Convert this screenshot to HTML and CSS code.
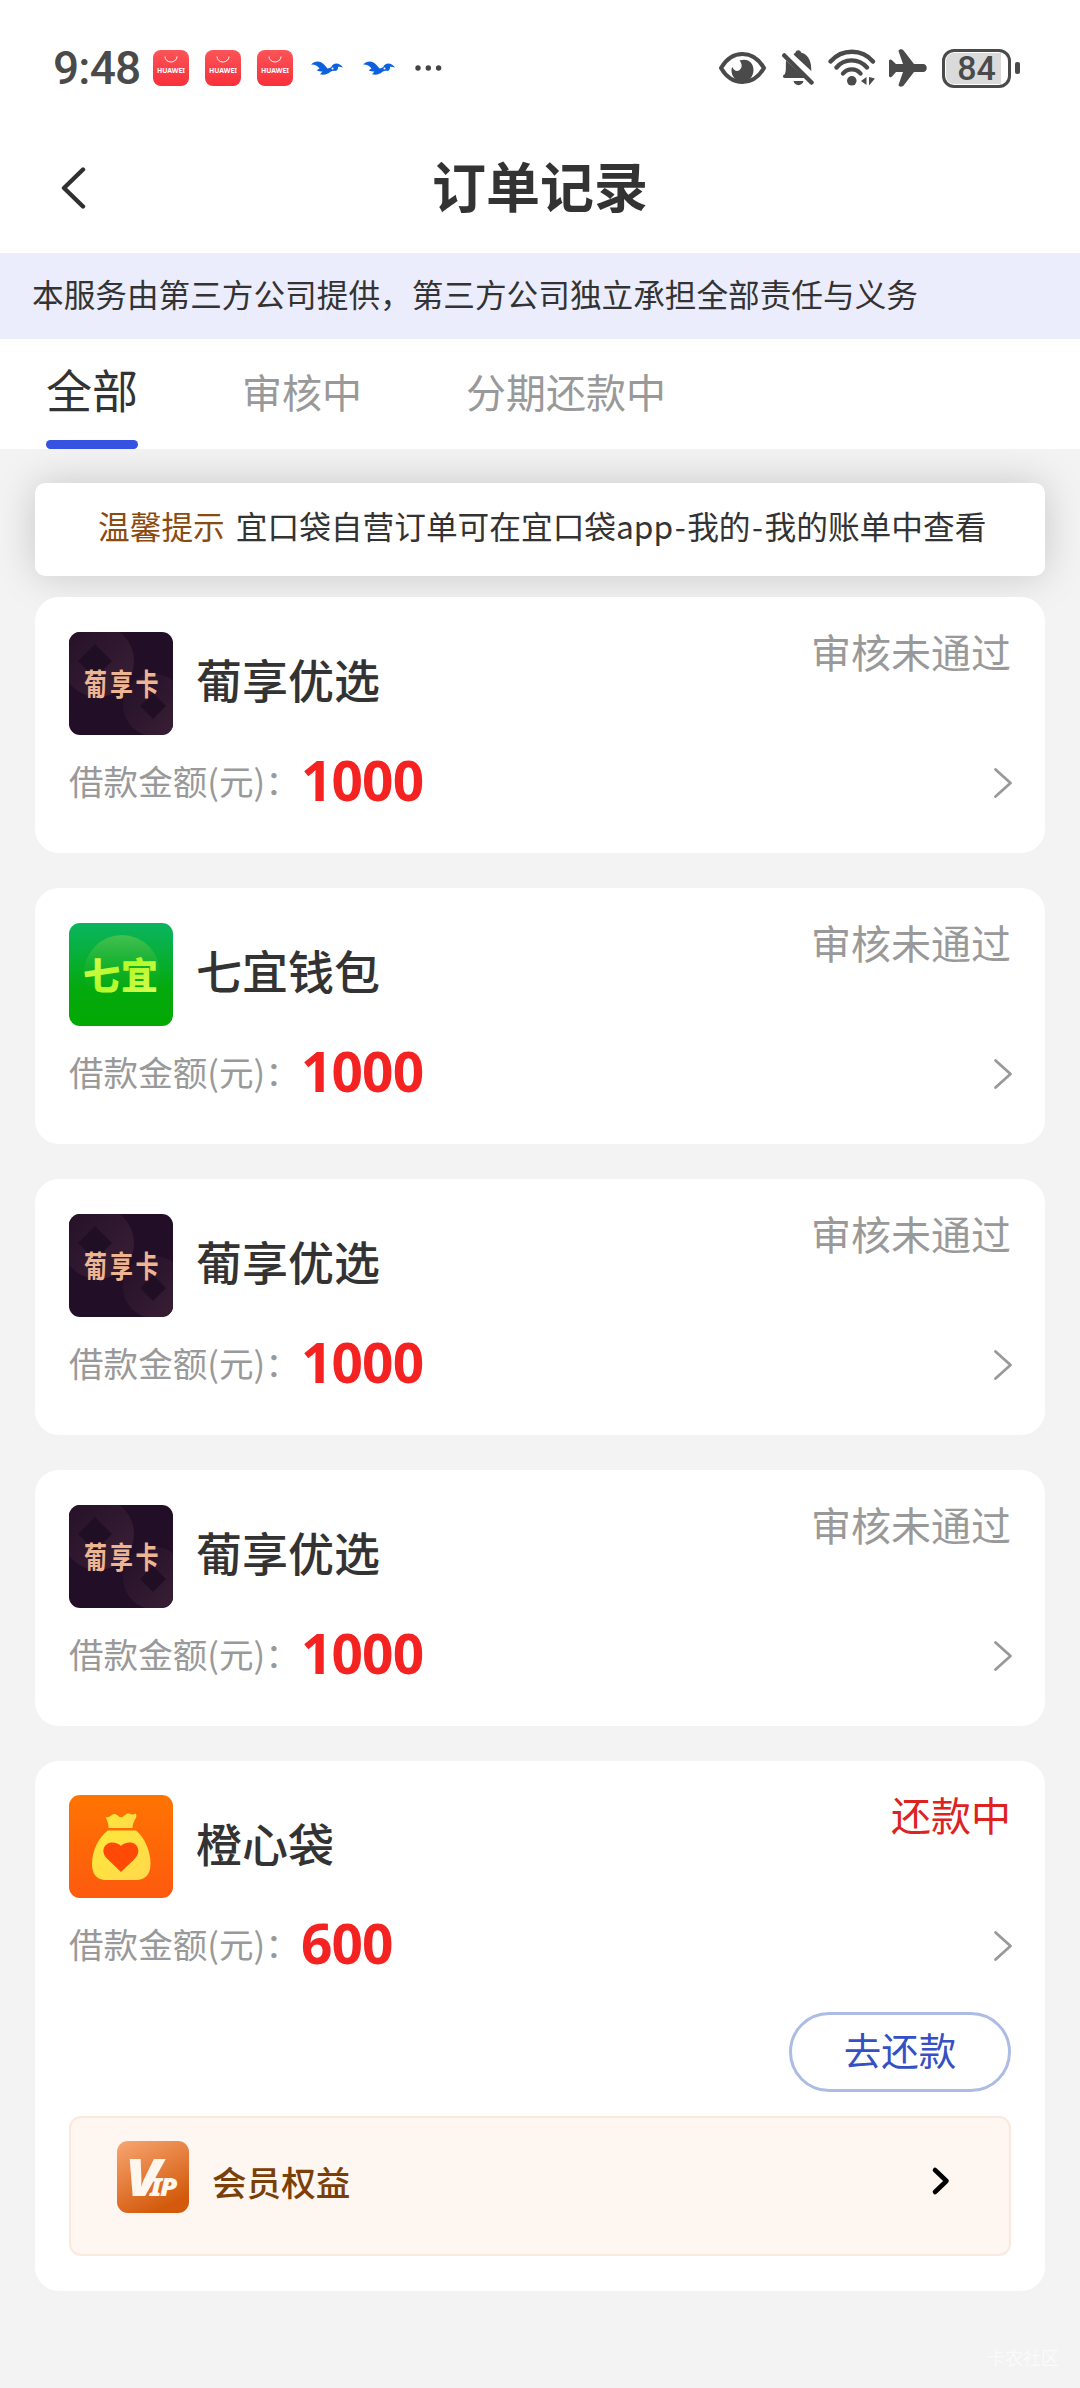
FILE: index.html
```html
<!DOCTYPE html>
<html lang="zh-CN">
<head>
<meta charset="utf-8">
<title>订单记录</title>
<link rel="stylesheet" href="styles.css">
</head>
<body>
<svg class="defs" width="0" height="0" aria-hidden="true">
  <defs>
    <linearGradient id="g-store" x1="0" y1="0" x2="0" y2="1"><stop offset="0" stop-color="#fb5458"/><stop offset="1" stop-color="#f8303a"/></linearGradient>
    <linearGradient id="g-green" x1="0" y1="0" x2="0" y2="1"><stop offset="0" stop-color="#0ab560"/><stop offset=".65" stop-color="#04a90c"/><stop offset="1" stop-color="#02a802"/></linearGradient>
    <linearGradient id="g-disc" x1="0" y1="0" x2="0" y2="1"><stop offset="0" stop-color="#45c050"/><stop offset=".8" stop-color="#07ab12" stop-opacity="0"/></linearGradient>
    <linearGradient id="g-lime" x1="0" y1="0" x2="1" y2="1"><stop offset="0" stop-color="#e6f95a"/><stop offset=".5" stop-color="#b4fb28"/><stop offset="1" stop-color="#e0fa60"/></linearGradient>
    <linearGradient id="g-orange" x1="0" y1="0" x2="0" y2="1"><stop offset="0" stop-color="#ff7402"/><stop offset="1" stop-color="#fd5a0e"/></linearGradient>
    <linearGradient id="g-bag" x1="0" y1="0" x2="1" y2="1"><stop offset="0" stop-color="#ffe93a"/><stop offset="1" stop-color="#ffd84c"/></linearGradient>
    <linearGradient id="g-vip" x1="0" y1="0" x2=".5" y2="1"><stop offset="0" stop-color="#f8a672"/><stop offset="1" stop-color="#d35a0c"/></linearGradient>
    <linearGradient id="g-ring" x1="0" y1="0" x2="1" y2="1"><stop offset="0" stop-color="#241028"/><stop offset="1" stop-color="#3a2036"/></linearGradient>
  </defs>
  <symbol id="store" viewBox="0 0 36 36">
    <rect width="36" height="36" rx="8" fill="url(#g-store)"/>
    <path d="M12 6.500a6 5.500 0 0 0 12 0" fill="none" stroke="#fff" stroke-width="1"/>
  </symbol>
  <symbol id="bird" viewBox="0 0 32 14">
    <path d="M0 3.500C3 .3 7-.3 10 1.200c2.800 1.500 4.500 4 6.500 6.300 1.500-.2 2.800-.6 3.800-1.500C21.500 2 28 .5 32 6.500c-2-.8-3.500-1-5-.8.3 1.800-.5 3.300-2 4.300-2-.6-4-.3-5.500.8-2.700 2.200-6 3.700-10.500 2.400L11.500 10.500C9.500 10.500 7.500 10.500 5.800 9.300L8.500 7.500C6.500 4.500 3.500 3.300 0 3.500z" fill="#0b62dc"/>
    <circle cx="21.500" cy="7.500" r="1" fill="#fff"/>
  </symbol>
  <symbol id="chevron" viewBox="0 0 20 32">
    <path d="M2.500 2.500 17.500 16 2.500 29.500" fill="none" stroke="#999" stroke-width="2.800" stroke-linecap="round" stroke-linejoin="round"/>
  </symbol>
  <symbol id="pu-back" viewBox="0 0 104 103">
    <rect width="104" height="103" fill="#220f27"/>
    <circle cx="29" cy="29" r="36" fill="url(#g-ring)"/>
    <path d="M26 12 43 29 26 46 9 29z" fill="#200e25"/>
    <circle cx="85" cy="73" r="31" fill="url(#g-ring)"/>
    <path d="M84 61 97 74 84 87 71 74z" fill="#200e25"/>
  </symbol>
</svg>

<header class="statusbar">
  <div class="status-left">
    <span class="clock">9:48</span>
    <svg class="app-dot" width="36" height="36"><use href="#store"/><text x="4" y="23.400" class="store-word" textLength="28" lengthAdjust="spacingAndGlyphs">HUAWEI</text></svg>
    <svg class="app-dot" width="36" height="36"><use href="#store"/><text x="4" y="23.400" class="store-word" textLength="28" lengthAdjust="spacingAndGlyphs">HUAWEI</text></svg>
    <svg class="app-dot" width="36" height="36"><use href="#store"/><text x="4" y="23.400" class="store-word" textLength="28" lengthAdjust="spacingAndGlyphs">HUAWEI</text></svg>
    <svg class="bird" width="32" height="14"><use href="#bird"/></svg>
    <svg class="bird" width="32" height="14"><use href="#bird"/></svg>
    <svg class="more" width="28" height="8" viewBox="0 0 28 8" fill="#444"><circle cx="4" cy="4" r="2.700"/><circle cx="14.300" cy="4" r="2.700"/><circle cx="24.600" cy="4" r="2.700"/></svg>
  </div>
  <div class="status-right">
    <svg class="eye" width="47" height="34" viewBox="0 0 47 34">
      <path d="M2 17C7 8.500 14.500 3 23.500 3S40 8.500 45 17C40 25.500 32.500 31 23.500 31S7 25.500 2 17z" fill="none" stroke="#4a4a4a" stroke-width="4" stroke-linejoin="round"/>
      <path d="M20.500 9.500C29 6.500 34.500 12 34.500 19c0 7-5 11.500-11 11.500S12.500 26 12.500 19.500c0-1.600.3-2.500.8-3.500 1.700 3.800 4.700 4.700 7 3.200 3-2 3.200-6.200.2-9.700z" fill="#4a4a4a"/>
    </svg>
    <svg class="bell" width="32" height="38" viewBox="0 0 32 38" fill="#4a4a4a">
      <path d="M4 11.500 23 29H2.500c-2 0-2-3 0-3.500C4.500 23 3.600 17.500 4 11.500zM11.500 5.500C12.500 4.500 13 4 13.500 3.600c.5-3 5-3 5.500 0C27 6 29.500 13 29.300 22zM11.500 32h10c-1 5.500-9 5.500-10 0z"/>
      <path d="M2.300 6.500 29.500 33.500" fill="none" stroke="#4a4a4a" stroke-width="4.500" stroke-linecap="round"/>
    </svg>
    <svg class="wifi" width="48" height="38" viewBox="0 0 48 38" fill="none" stroke="#4a4a4a" stroke-width="4.300" stroke-linecap="round">
      <path d="M2.500 12.500C14-.5 34-.5 45 12.500M8.500 18.500c8-9.500 22-9.500 30.500 0M15 24.500c4.500-5.500 13-5.500 17.500 0"/>
      <circle cx="23.800" cy="31.800" r="4.800" fill="#4a4a4a" stroke="none"/>
      <path d="M38.500 28v8l-5.500-4zM41 28v8.500l6-7z" fill="#4a4a4a" stroke="none"/>
    </svg>
    <svg class="plane" width="38" height="38" viewBox="0 0 38 38" fill="#4a4a4a">
      <path d="M9.500 2c.5-2 4-2.500 5.500 0l10 13h9c5 0 5 8 0 8h-9L15 36c-1.500 2.500-5 2-5.500 0L14 23H7l-4 4.500c-1 1.200-3 .8-3-.8V12c0-1.700 2-2 3-.8L7 15h7z"/>
    </svg>
    <div class="battery"><span class="battery-body">84</span><i class="battery-tip"></i></div>
  </div>
</header>

<nav class="titlebar">
  <svg class="back" width="26" height="44" viewBox="0 0 26 44"><path d="M23 3.500 4 22 23 40.500" fill="none" stroke="#303030" stroke-width="4.400" stroke-linecap="round" stroke-linejoin="round"/></svg>
  <h1 class="title">订单记录</h1>
</nav>

<p class="notice">本服务由第三方公司提供，第三方公司独立承担全部责任与义务</p>

<div class="tabs">
  <a class="tab tab-active">全部</a>
  <a class="tab">审核中</a>
  <a class="tab">分期还款中</a>
</div>

<main class="page">
  <p class="tip"><span class="tip-label">温馨提示</span><span>宜口袋自营订单可在宜口袋app<span class="dash">-</span>我的<span class="dash">-</span>我的账单中查看</span></p>

  <section class="card">
    <div class="card-head">
      <svg class="logo" viewBox="0 0 104 103"><use href="#pu-back"/><text class="pu-word" transform="scale(1 1.300)" x="15 41 66.500" y="48.500">葡享卡</text></svg>
      <h2 class="name">葡享优选</h2>
      <span class="state">审核未通过</span>
    </div>
    <div class="amount-row"><span class="label">借款金额(元)：</span><b class="amount">1000</b><svg class="arrow" width="20" height="32"><use href="#chevron"/></svg></div>
  </section>

  <section class="card">
    <div class="card-head">
      <svg class="logo" viewBox="0 0 104 103">
        <rect width="104" height="103" fill="url(#g-green)"/>
        <circle cx="53" cy="50" r="38" fill="url(#g-disc)"/>
        <text class="qi-word" x="14 52" y="67">七宜</text>
      </svg>
      <h2 class="name">七宜钱包</h2>
      <span class="state">审核未通过</span>
    </div>
    <div class="amount-row"><span class="label">借款金额(元)：</span><b class="amount">1000</b><svg class="arrow" width="20" height="32"><use href="#chevron"/></svg></div>
  </section>

  <section class="card">
    <div class="card-head">
      <svg class="logo" viewBox="0 0 104 103"><use href="#pu-back"/><text class="pu-word" transform="scale(1 1.300)" x="15 41 66.500" y="48.500">葡享卡</text></svg>
      <h2 class="name">葡享优选</h2>
      <span class="state">审核未通过</span>
    </div>
    <div class="amount-row"><span class="label">借款金额(元)：</span><b class="amount">1000</b><svg class="arrow" width="20" height="32"><use href="#chevron"/></svg></div>
  </section>

  <section class="card">
    <div class="card-head">
      <svg class="logo" viewBox="0 0 104 103"><use href="#pu-back"/><text class="pu-word" transform="scale(1 1.300)" x="15 41 66.500" y="48.500">葡享卡</text></svg>
      <h2 class="name">葡享优选</h2>
      <span class="state">审核未通过</span>
    </div>
    <div class="amount-row"><span class="label">借款金额(元)：</span><b class="amount">1000</b><svg class="arrow" width="20" height="32"><use href="#chevron"/></svg></div>
  </section>

  <section class="card card-active">
    <div class="card-head">
      <svg class="logo" viewBox="0 0 104 103">
        <rect width="104" height="103" fill="url(#g-orange)"/>
        <path d="M36.500 22.500c2.500-.3 5-1 7-3 2.500-1.500 5 .5 7 2.500h3c2-2 5-4.500 8-3 1.500 1 3.500.2 5-.5 1.500 1.500 1 4-.5 6-1.500 3-2.500 5.500-2.500 8.500h-24c0-4-1-7.500-3-10.500z" fill="url(#g-bag)"/>
        <path d="M39 35.500h28c8 6.500 14.500 20 14.500 33C81.500 80 76 85 67 85H37c-9 0-14-5-14-16.500C23 55.500 30 42 39 35.500z" fill="url(#g-bag)"/>
        <path d="M52 77 38 63.500C30.500 56 36 47.500 43 47.500c4 0 7 1.500 9 3.500 2-2 5-3.500 9-3.500 7 0 12 8.500 5 16z" fill="#fe4a06"/>
      </svg>
      <h2 class="name">橙心袋</h2>
      <span class="state state-due">还款中</span>
    </div>
    <div class="amount-row"><span class="label">借款金额(元)：</span><b class="amount">600</b><svg class="arrow" width="20" height="32"><use href="#chevron"/></svg></div>
    <a class="repay">去还款</a>
    <div class="vip">
      <svg class="vip-logo" width="72" height="72" viewBox="0 0 72 72">
        <rect width="72" height="72" rx="11" fill="url(#g-vip)"/>
        <text class="vip-word" transform="scale(1.120 1)" x="7.500" y="55">V<tspan class="vip-small" x="29.500 38.500">IP</tspan></text>
      </svg>
      <span class="vip-text">会员权益</span>
      <svg class="vip-arrow" width="20" height="32" viewBox="0 0 20 32"><path d="M4 5 15.500 16 4 27" fill="none" stroke="#000" stroke-width="4.600" stroke-linecap="round" stroke-linejoin="round"/></svg>
    </div>
  </section>
</main>
<footer class="watermark">卡农社区</footer>
</body>
</html>
```

FILE: styles.css
```css
* { box-sizing: border-box; margin: 0; padding: 0; }
body {
  width: 1080px;
  height: 2388px;
  display: flex;
  flex-direction: column;
  overflow: hidden;
  background: #f3f3f3;
  color: #333;
  font-family: "Noto Sans CJK SC", sans-serif;
}
.defs { position: absolute; }
svg { display: block; flex: none; }

/* status bar */
.statusbar {
  height: 134px;
  padding: 2px 60px 0 53px;
  display: flex;
  justify-content: space-between;
  align-items: center;
  background: #fff;
}
.status-left, .status-right { display: flex; align-items: center; }
.clock {
  width: 100px;
  font: 500 46px/46px Roboto, sans-serif;
  letter-spacing: -.8px;
  color: #4a4a4a;
}
.app-dot { margin-right: 16px; }
.bird { margin: 0 18px 0 2px; }
.more { margin-left: 1px; }
.store-word { font: 700 7.500px "Noto Sans", sans-serif; fill: #fff; }
.eye { margin-right: 16px; }
.bell { margin-right: 14px; }
.wifi { margin-right: 13px; }
.plane { margin-right: 15px; }
.battery { display: flex; align-items: center; gap: 4px; }
.battery-body {
  width: 69px;
  height: 39px;
  border: 3px solid #4a4a4a;
  border-radius: 12px;
  background: linear-gradient(90deg, #dadada 56px, #fff 56px);
  box-shadow: inset 0 0 0 1px #fff;
  font: 500 34px/32px Roboto, sans-serif;
  text-align: center;
  color: #4a4a4a;
}
.battery-tip { width: 5px; height: 12px; border-radius: 2px; background: #4a4a4a; }

/* title */
.titlebar {
  height: 119px;
  padding: 0 60px 11px;
  display: grid;
  grid-template-columns: 100px 1fr 100px;
  align-items: center;
  background: #fff;
}
.title { margin-bottom: 6px; font-size: 54px; line-height: 60px; font-weight: 700; text-align: center; }

.notice {
  height: 86px;
  padding-left: 32px;
  background: #ebedfc;
  font-size: 31.650px;
  line-height: 81px;
  white-space: nowrap;
}

/* filter tabs */
.tabs {
  position: relative;
  z-index: 1;
  height: 110px;
  padding-left: 46px;
  display: flex;
  gap: 104px;
  background: #fff;
}
.tab {
  height: 110px;
  font-size: 40px;
  line-height: 104px;
  color: #999;
  white-space: nowrap;
}
.tab-active { font-size: 46px; line-height: 98px; color: #333; }
.tab-active::after {
  content: "";
  display: block;
  height: 9px;
  margin-top: 3px;
  border-radius: 4.500px;
  background: #3552e0;
}

/* list */
.page { padding: 34px 35px 0; }
.tip {
  height: 93px;
  margin-bottom: 21px;
  padding-left: 63px;
  display: flex;
  gap: 11px;
  border-radius: 10px;
  background: #fff;
  box-shadow: 0 0 40px rgba(0, 0, 0, .18);
  font-size: 31.700px;
  line-height: 84px;
  white-space: nowrap;
}
.tip-label { color: #8a4b10; }
.dash { padding: 0 1.500px; }

.card {
  position: relative;
  height: 256px;
  margin-bottom: 35px;
  padding: 35px 34px 0;
  border-radius: 24px;
  background: #fff;
}
.card-head { height: 103px; display: flex; }
.logo { width: 104px; height: 103px; border-radius: 11px; }
.name { flex: 1; margin-left: 23px; font-size: 46px; font-weight: 500; line-height: 92px; }
.state { font-size: 40px; line-height: 39px; color: #999; }
.state-due { color: #dd2222; }
.pu-word { font: 700 23px "Noto Sans CJK SC", sans-serif; fill: #eeb592; }
.qi-word { font: 900 37px "Noto Sans CJK SC", sans-serif; fill: url(#g-lime); }

.amount-row { height: 90px; display: flex; align-items: center; }
.label { width: 232px; font-size: 34.600px; line-height: 40px; color: #999; white-space: nowrap; }
.amount { flex: 1; font: 700 55px/60px "Noto Sans", sans-serif; letter-spacing: -.9px; color: #f52222; }
.arrow { margin: 6px -2px 0 0; }

.card-active { height: 530px; padding-top: 34px; }
.card-active .name { line-height: 94px; }
.repay {
  display: block;
  width: 222px;
  height: 80px;
  margin: 24px 0 24px auto;
  border: 3px solid #adbce4;
  border-radius: 40px;
  font-size: 37.500px;
  line-height: 67px;
  text-align: center;
  color: #3450c4;
}
.vip {
  height: 140px;
  padding: 0 58px 0 46px;
  display: flex;
  align-items: center;
  border: 2px solid #fbe9df;
  border-radius: 12px;
  background: #fef6f0;
}
.vip-logo { margin-bottom: 18px; }
.vip-word { font: italic 900 52px "Noto Sans", sans-serif; fill: #fff6ee; }
.vip-small { font-size: 25px; }
.vip-text { flex: 1; margin: 0 0 11px 23px; font-size: 34.600px; font-weight: 500; line-height: 40px; color: #7a4008; }
.vip-arrow { margin-bottom: 10px; }

.watermark {
  margin-top: 18px;
  padding-right: 21px;
  text-align: right;
  font-size: 18px;
  line-height: 26px;
  color: #fafafa;
}
```
